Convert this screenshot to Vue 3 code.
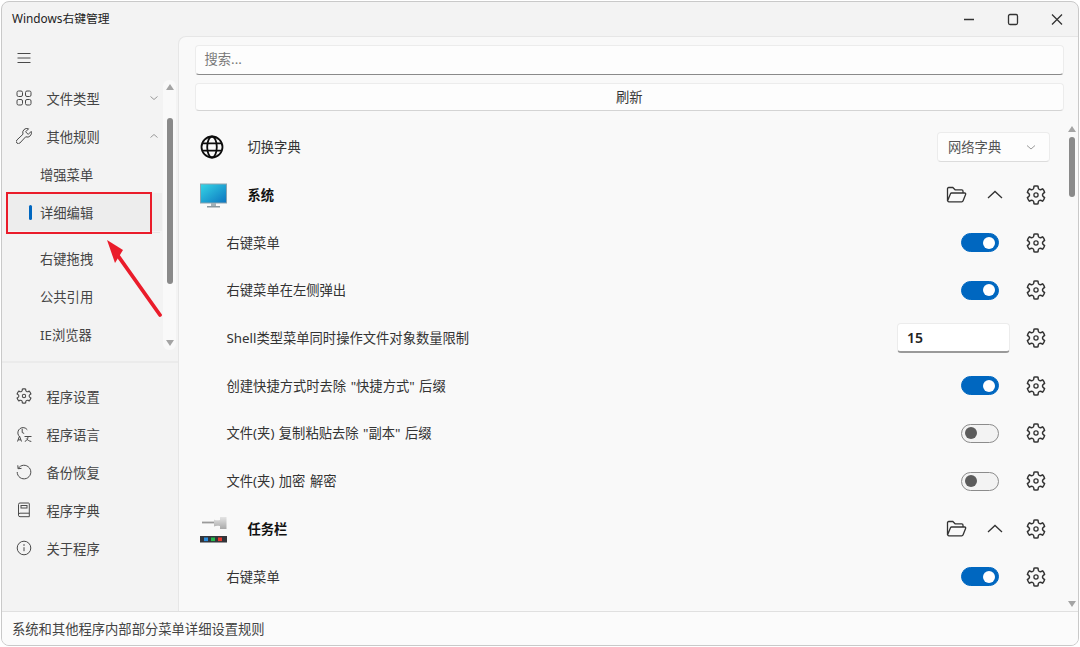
<template>
  <div class="window">
    <header class="titlebar">
      <span class="title">Windows右键管理</span>
      <div class="caption">
        <svg width="44" height="24" viewBox="0 0 44 24"><path d="M18 12.500h10" class="line" /></svg>
        <svg width="44" height="24" viewBox="0 0 44 24"><rect x="18.500" y="7.500" width="9" height="10" rx="1.500" class="line" /></svg>
        <svg width="44" height="24" viewBox="0 0 44 24"><path d="M18 7.500l10 10M28 7.500l-10 10" class="line" /></svg>
      </div>
    </header>

    <div class="body">
      <aside class="sidebar">
        <div class="menu-btn">
          <svg width="16" height="16" viewBox="0 0 16 16"><path d="M1.500 3.500h13M1.500 8h13M1.500 12.500h13" class="thin" /></svg>
        </div>

        <div class="nav-scroll">
          <nav class="nav">
            <div class="nav-item">
              <svg class="nav-icon" viewBox="0 0 16 16">
                <rect x="1" y="1" width="5.500" height="5.500" rx="1.500" class="thin" />
                <rect x="9.500" y="1" width="5.500" height="5.500" rx="1.500" class="thin" />
                <rect x="1" y="9.500" width="5.500" height="5.500" rx="1.500" class="thin" />
                <rect x="9.500" y="9.500" width="5.500" height="5.500" rx="1.500" class="thin" />
              </svg>
              <span>文件类型</span>
              <svg class="nav-chevron" viewBox="0 0 10 10"><path d="M1.500 3.500l3.500 3 3.500-3" class="pale" /></svg>
            </div>
            <div class="nav-item">
              <svg class="nav-icon" viewBox="0 0 16 16">
                <path d="M15.200 3.400l-3 3-2.600-2.600 3-3a4.200 4.200 0 0 0-5.600 5.400L.900 12a2.100 2.100 0 0 0 3 3l5.800-6.200a4.200 4.200 0 0 0 5.500-5.400z" class="thin" />
              </svg>
              <span>其他规则</span>
              <svg class="nav-chevron" viewBox="0 0 10 10"><path d="M1.500 6.500l3.500-3 3.500 3" class="pale" /></svg>
            </div>
            <div class="nav-item sub">增强菜单</div>
            <div class="nav-item sub active">
              <i class="marker"></i>
              详细编辑
            </div>
            <div class="nav-rule"></div>
            <div class="nav-item sub">右键拖拽</div>
            <div class="nav-item sub">公共引用</div>
            <div class="nav-item sub">IE浏览器</div>
          </nav>
          <div class="scrollbar nav-bar">
            <i class="arrow up"></i>
            <i class="thumb nav-thumb"></i>
            <i class="arrow down"></i>
          </div>
        </div>

        <div class="side-rule"></div>

        <div class="nav">
          <div class="nav-item">
            <svg class="nav-icon" viewBox="2 2 20 20"><path :d="gearPath" class="gear" /></svg>
            <span>程序设置</span>
          </div>
          <div class="nav-item">
            <svg class="nav-icon" viewBox="0 0 16 16">
              <path d="M2.800 9.800A5.200 5.200 0 1 1 11.300 3.800M6.200 2.800v3.700l2 1" class="thin" />
              <path d="M1.500 15.500l2-5.500 2 5.500M2.200 13.800h2.700M8.500 10.500h7M12 10.500c0 2.500-1 4-3.200 5M10.300 12.500c1 1.500 2.700 2.500 5 3" class="thin" />
            </svg>
            <span>程序语言</span>
          </div>
          <div class="nav-item">
            <svg class="nav-icon" viewBox="0 0 16 16">
              <path d="M2.200 4.500A6.800 6.800 0 1 1 1.200 8M1.800 1.300l.3 3.400 3.400-.3" class="thin" />
            </svg>
            <span>备份恢复</span>
          </div>
          <div class="nav-item">
            <svg class="nav-icon" viewBox="0 0 16 16">
              <path d="M4 1h8.500a.8.800 0 0 1 .8.800v12.900H4a1.500 1.500 0 0 1-1.500-1.500V2.500A1.500 1.500 0 0 1 4 1zM2.500 12.500a1.500 1.500 0 0 1 1.500-1.300h9.300" class="thin" />
              <rect x="5" y="3.500" width="6" height="2.500" class="thin" />
            </svg>
            <span>程序字典</span>
          </div>
          <div class="nav-item">
            <svg class="nav-icon" viewBox="0 0 16 16">
              <circle cx="8" cy="8" r="6.800" class="thin" />
              <path d="M8 7.200v4" class="thin" />
              <circle cx="8" cy="5" r=".8" fill="#444" />
            </svg>
            <span>关于程序</span>
          </div>
        </div>
      </aside>

      <main class="panel">
        <div class="tools">
          <div class="search">搜索...</div>
          <div class="refresh">刷新</div>
        </div>

        <div class="content">
          <div class="rows">
            <div v-for="row in rows" :key="row.key" class="row" :class="'row-' + row.type">
              <span v-if="row.type === 'dict'" class="row-icon">
                <svg width="24" height="24" viewBox="0 0 24 24">
                  <circle cx="12" cy="12" r="10.500" class="globe" />
                  <ellipse cx="12" cy="12" rx="4.800" ry="10.500" class="globe" />
                  <path d="M2.500 8.300h19M2.500 15.700h19" class="globe" />
                </svg>
              </span>

              <span v-if="row.icon === 'monitor'" class="row-icon">
                <svg width="29" height="25" viewBox="0 0 29 25">
                  <defs>
                    <linearGradient id="screen" x1="0" y1="0" x2="1" y2="1">
                      <stop offset="0" stop-color="#35d6e6" />
                      <stop offset="1" stop-color="#0c74c0" />
                    </linearGradient>
                  </defs>
                  <rect x="2.500" y="1" width="26" height="19" fill="url(#screen)" stroke="#8ba3af" />
                  <rect x="13" y="20" width="5" height="3" fill="#a3b1b8" />
                  <rect x="9" y="23" width="13" height="1.500" fill="#8a989f" />
                </svg>
              </span>
              <span v-if="row.icon === 'pin'" class="row-icon">
                <svg width="29" height="28" viewBox="0 0 29 28">
                  <defs>
                    <linearGradient id="pinhead" x1="0" y1="0" x2="0" y2="1">
                      <stop offset="0" stop-color="#e4e4e4" />
                      <stop offset="1" stop-color="#a9a9a9" />
                    </linearGradient>
                  </defs>
                  <path d="M4 7.500h12" stroke="#9a9a9a" stroke-width="1.800" />
                  <path d="M16 4.500c2 1 3.500 1 6 .5V2h6.500v12H22v-3c-2.500-.5-4-.5-6 .5z" fill="url(#pinhead)" />
                  <rect x="2" y="21" width="27" height="6.500" fill="#33353a" />
                  <rect x="6" y="22.500" width="4" height="3.600" fill="#2a8fe0" />
                  <rect x="13" y="22.500" width="4" height="3.600" fill="#22b84a" />
                  <rect x="20" y="22.500" width="4" height="3.600" fill="#e5392c" />
                </svg>
              </span>

              <span class="row-label">{{ row.label }}</span>

              <div v-if="row.type === 'dict'" class="select">
                <span class="select-text">网络字典</span>
                <svg width="10" height="10" viewBox="0 0 10 10"><path d="M1 3.500l4 3.500 4-3.500" class="pale" /></svg>
              </div>

              <template v-if="row.type === 'group'">
                <svg class="folder" width="21" height="18" viewBox="0 0 21 18">
                  <path d="M1.500 15V2.700a1.200 1.200 0 0 1 1.200-1.200h4.100l2.300 2.300h6.700a1.200 1.200 0 0 1 1.200 1.200v1.800M1.500 15l3-7.300a1.200 1.200 0 0 1 1.100-.7h13.100a1 1 0 0 1 .9 1.400l-2.500 6.400a1.500 1.500 0 0 1-1.400 1H3a1.500 1.500 0 0 1-1.500-1.800z" class="line" />
                </svg>
                <svg class="fold" width="16" height="10" viewBox="0 0 16 10"><path d="M1 8l7-6.500L15 8" class="line" /></svg>
              </template>

              <div v-if="row.type === 'toggle'" class="switch" :class="{ on: row.on }"><i></i></div>

              <div v-if="row.type === 'number'" class="number">{{ row.value }}</div>

              <svg v-if="row.type !== 'dict'" class="row-gear" width="24" height="24" viewBox="0 0 24 24"><path :d="gearPath" class="gear dark" /></svg>
            </div>
          </div>
          <div class="scrollbar main-bar">
            <i class="arrow up"></i>
            <i class="thumb main-thumb"></i>
            <i class="arrow down"></i>
          </div>
        </div>
      </main>
    </div>

    <footer class="statusbar">系统和其他程序内部部分菜单详细设置规则</footer>

    <!-- 截图上的标注 -->
    <div class="mark-box"></div>
    <svg class="mark-arrow" width="70" height="90" viewBox="0 0 70 90">
      <path d="M56 80L12 18" stroke="#ea1c2a" stroke-width="3.800" stroke-linecap="round" />
      <path d="M3 5l16 10-8 13z" fill="#ea1c2a" />
    </svg>
  </div>
</template>

<script setup>
const gearPath = 'M12.012 2.250c.734.008 1.465.093 2.182.253a.750.750 0 0 1 .582.649l.170 1.527a1.384 1.384 0 0 0 1.927 1.116l1.401-.615a.750.750 0 0 1 .850.174 9.792 9.792 0 0 1 2.204 3.792.750.750 0 0 1-.271.825l-1.242.916a1.381 1.381 0 0 0 0 2.226l1.243.915a.750.750 0 0 1 .272.826 9.797 9.797 0 0 1-2.204 3.792.750.750 0 0 1-.848.175l-1.407-.617a1.380 1.380 0 0 0-1.926 1.114l-.169 1.526a.750.750 0 0 1-.572.647 9.518 9.518 0 0 1-4.406 0 .750.750 0 0 1-.572-.647l-.168-1.524a1.382 1.382 0 0 0-1.926-1.110l-1.406.616a.750.750 0 0 1-.849-.175 9.798 9.798 0 0 1-2.204-3.796.750.750 0 0 1 .272-.826l1.243-.916a1.380 1.380 0 0 0 0-2.226l-1.243-.914a.750.750 0 0 1-.272-.826 9.793 9.793 0 0 1 2.205-3.792.750.750 0 0 1 .850-.174l1.400.615a1.387 1.387 0 0 0 1.930-1.118l.170-1.526a.750.750 0 0 1 .583-.650c.718-.159 1.450-.243 2.202-.252Zm0 1.500a9.135 9.135 0 0 0-1.355.117l-.109.977A2.886 2.886 0 0 1 6.525 7.170l-.898-.394a8.293 8.293 0 0 0-1.348 2.317l.798.587a2.881 2.881 0 0 1 0 4.643l-.798.588c.320.842.775 1.626 1.347 2.322l.905-.397a2.882 2.882 0 0 1 4.017 2.318l.110.984c.889.150 1.798.150 2.687 0l.110-.984a2.881 2.881 0 0 1 4.018-2.322l.905.396a8.296 8.296 0 0 0 1.347-2.318l-.798-.588a2.881 2.881 0 0 1 0-4.643l.796-.587a8.293 8.293 0 0 0-1.348-2.317l-.896.393a2.884 2.884 0 0 1-4.023-2.324l-.110-.976a8.988 8.988 0 0 0-1.333-.117ZM12 9.250a2.750 2.750 0 1 1 0 5.500 2.750 2.750 0 0 1 0-5.500Zm0 1.300a1.450 1.450 0 1 0 0 2.900 1.450 1.450 0 0 0 0-2.900Z'

const rows = [
  { key: 'dict', type: 'dict', label: '切换字典' },
  { key: 'sys', type: 'group', icon: 'monitor', label: '系统' },
  { key: 'menu', type: 'toggle', label: '右键菜单', on: true },
  { key: 'left', type: 'toggle', label: '右键菜单在左侧弹出', on: true },
  { key: 'limit', type: 'number', label: 'Shell类型菜单同时操作文件对象数量限制', value: 15 },
  { key: 'link', type: 'toggle', label: '创建快捷方式时去除 "快捷方式" 后缀', on: true },
  { key: 'copy', type: 'toggle', label: '文件(夹) 复制粘贴去除 "副本" 后缀', on: false },
  { key: 'crypt', type: 'toggle', label: '文件(夹) 加密 解密', on: false },
  { key: 'task', type: 'group', icon: 'pin', label: '任务栏' },
  { key: 'taskmenu', type: 'toggle', label: '右键菜单', on: true }
]
</script>

<style>
html,
body {
  margin: 0;
  background: #fff;
}
</style>

<style scoped>
.window {
  position: relative;
  box-sizing: border-box;
  display: flex;
  flex-direction: column;
  width: 1078px;
  height: 645px;
  margin: 1px;
  overflow: hidden;
  border: 1px solid #c9c9c9;
  border-radius: 8px;
  background: #f3f3f3;
  color: #333;
  font-family: "Noto Sans", "Noto Sans CJK SC", sans-serif;
  font-size: 13.300px;
}

.line {
  fill: none;
  stroke: #333;
  stroke-width: 1.300;
}

.thin {
  fill: none;
  stroke: #4a4a4a;
  stroke-width: 1;
}

.pale {
  fill: none;
  stroke: #9a9a9a;
  stroke-width: 1;
}

.gear {
  fill: #4a4a4a;
  fill-rule: evenodd;
}

.gear.dark {
  fill: #333;
}

.globe {
  fill: none;
  stroke: #0c0c0c;
  stroke-width: 1.800;
}

.titlebar {
  display: flex;
  flex: none;
  align-items: center;
  justify-content: space-between;
  height: 33px;
  padding: 0 0 1px 10px;
}

.title {
  margin-bottom: 2px;
  font-size: 11.800px;
  color: #222;
}

.caption {
  display: flex;
}

.body {
  display: flex;
  flex: 1;
  min-height: 0;
}

.sidebar {
  display: flex;
  flex: none;
  flex-direction: column;
  width: 176px;
}

.menu-btn {
  display: flex;
  align-items: center;
  height: 43px;
  padding-left: 14px;
}

.nav-scroll {
  display: flex;
  height: 280px;
  overflow: hidden;
}

.nav {
  display: flex;
  flex: 1;
  flex-direction: column;
  min-width: 0;
}

.nav-item {
  position: relative;
  display: flex;
  flex: none;
  align-items: center;
  box-sizing: border-box;
  height: 38px;
  padding-left: 14px;
  color: #444;
}

.nav-item.sub {
  padding-left: 38px;
}

.nav-item.active {
  margin-left: 4px;
  padding-left: 34px;
  background: #ededed;
}

.marker {
  position: absolute;
  top: 12px;
  left: 23px;
  width: 2.500px;
  height: 15px;
  border-radius: 2px;
  background: #0067c0;
}

.nav-rule {
  flex: none;
  height: 1px;
  margin: 1px 2px 6px 23px;
  background: #e6e6e6;
}

.nav-icon {
  flex: none;
  width: 16px;
  height: 16px;
  margin-right: 14.500px;
}

.nav-chevron {
  width: 10px;
  height: 10px;
  margin-left: auto;
  margin-right: 3px;
}

.side-rule {
  flex: none;
  height: 2px;
  margin: 2px 0 14px;
  background: #ebebeb;
}

.scrollbar {
  position: relative;
  flex: none;
  box-sizing: border-box;
}

.nav-bar {
  width: 13px;
  height: 270px;
  margin: 1px 2px 0 1px;
  border-radius: 6px;
  background: #f9f9f9;
}

.main-bar {
  width: 14px;
}

.thumb {
  position: absolute;
  left: 3.500px;
  width: 6px;
  border-radius: 3px;
  background: #8a8a8a;
}

.main-bar .thumb {
  left: 5px;
}

.nav-thumb {
  top: 38px;
  height: 166px;
}

.main-thumb {
  top: 26px;
  height: 60px;
}

.arrow {
  position: absolute;
  left: 3px;
  width: 0;
  height: 0;
  border-right: 4px solid transparent;
  border-left: 4px solid transparent;
}

.main-bar .arrow {
  left: 4px;
}

.arrow.up {
  top: 4px;
  border-bottom: 6px solid #a4a4a4;
}

.main-bar .arrow.up {
  top: 15px;
}

.arrow.down {
  bottom: 4px;
  border-top: 6px solid #a4a4a4;
}

.panel {
  display: flex;
  flex: 1;
  flex-direction: column;
  min-width: 0;
  border-top: 1px solid #e6e6e6;
  border-left: 1px solid #e6e6e6;
  border-top-left-radius: 8px;
  background: #f9f9f9;
}

.tools {
  display: flex;
  flex: none;
  flex-direction: column;
  gap: 8px;
  padding: 8px 14px 0 15.500px;
}

.search,
.refresh,
.select,
.number {
  box-sizing: border-box;
  border: 1px solid #ececec;
  border-radius: 4px;
  background: #fdfdfd;
}

.search {
  height: 30px;
  padding-left: 9px;
  border-bottom: 1px solid #8a8a8a;
  color: #777;
  line-height: 27px;
}

.refresh {
  height: 28px;
  border-bottom-color: #d4d4d4;
  line-height: 26px;
  text-align: center;
}

.content {
  display: flex;
  flex: 1;
  min-height: 0;
  overflow: hidden;
}

.rows {
  flex: 1;
  min-width: 0;
  padding: 12.500px 16.500px 0 19px;
}

.row {
  display: flex;
  align-items: center;
  box-sizing: border-box;
  height: 47.700px;
  padding-left: 28.500px;
}

.row-group,
.row-dict {
  padding-left: 0;
}

.row-icon {
  display: flex;
  flex: none;
  width: 49.500px;
}

.row-dict .row-icon {
  width: 47.500px;
  padding-left: 2px;
}

.row-label {
  flex: 1;
  min-width: 0;
  padding-bottom: 1px;
  word-spacing: 1px;
}

.row-group .row-label {
  color: #111;
  font-weight: 700;
}

.select {
  display: flex;
  flex: none;
  align-items: center;
  justify-content: space-between;
  width: 113px;
  height: 30px;
  margin-right: -2.500px;
  padding: 0 13px 0 10px;
  border-bottom-color: #dcdcdc;
  color: #555;
}

.select-text {
  padding-bottom: 2px;
}

.folder {
  flex: none;
  margin-right: 20.500px;
}

.fold {
  flex: none;
  margin-right: 20.500px;
}

.switch {
  box-sizing: border-box;
  display: flex;
  flex: none;
  align-items: center;
  width: 38px;
  height: 19px;
  margin-right: 24.500px;
  padding: 0 3px;
  border: 1px solid #8c8c8c;
  border-radius: 10px;
  background: #f3f3f3;
}

.switch i {
  width: 12px;
  height: 12px;
  border-radius: 50%;
  background: #5c5c5c;
}

.switch.on {
  justify-content: flex-end;
  border-color: #0067c0;
  background: #0067c0;
}

.switch.on i {
  background: #fff;
}

.number {
  flex: none;
  width: 113px;
  height: 30px;
  margin-right: 13.500px;
  padding-left: 9px;
  border-bottom: 2px solid #9a9a9a;
  background: #fff;
  color: #222;
  font-size: 14px;
  font-weight: 600;
  line-height: 27px;
}

.row-gear {
  flex: none;
}

.statusbar {
  flex: none;
  height: 33px;
  padding-left: 10px;
  border-top: 1px solid #e0e0e0;
  background: #fbfbfb;
  color: #444;
  line-height: 34px;
}

.mark-box {
  position: absolute;
  top: 190px;
  left: 4px;
  box-sizing: border-box;
  width: 146px;
  height: 42px;
  border: 2px solid #ea1c2a;
}

.mark-arrow {
  position: absolute;
  top: 233px;
  left: 102px;
}
</style>
